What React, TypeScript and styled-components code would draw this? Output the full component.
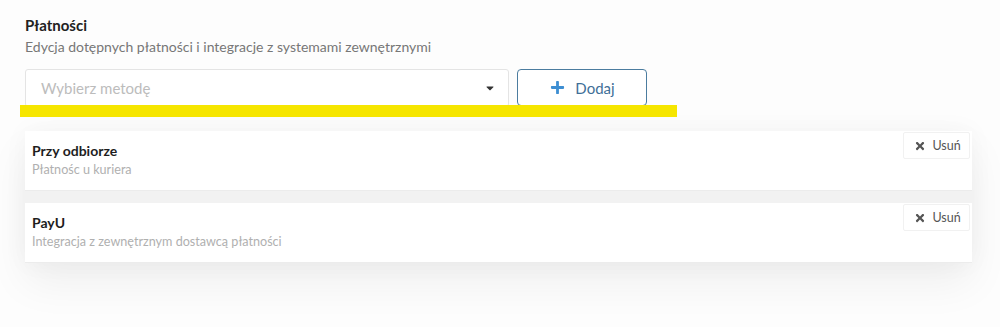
import React from 'react';
import styled, { createGlobalStyle } from 'styled-components';
import { FaPlus, FaTimes, FaCaretDown } from 'react-icons/fa';

const GlobalStyle = createGlobalStyle`
  body {
    margin: 0;
    background: #fdfdfd;
    font-family: Lato, 'Open Sans', sans-serif;
  }
`;

const Page = styled.div`
  width: 1000px;
  height: 327px;
  overflow: hidden;
  padding: 15px 28px 0 25px;
  box-sizing: border-box;
`;

const Title = styled.h2`
  margin: 0;
  font-size: 15px;
  line-height: 20px;
  font-weight: 700;
  color: #222;
`;

const Subtitle = styled.p`
  margin: 3px 0 0;
  font-size: 14px;
  line-height: 18px;
  color: #777;
`;

const Controls = styled.div`
  position: relative;
  display: flex;
  gap: 8px;
  margin-top: 13px;
`;

const Select = styled.div`
  width: 484px;
  height: 38px;
  box-sizing: border-box;
  border: 1px solid #e4e4e4;
  border-radius: 3px;
  background: #fff;
  display: flex;
  align-items: center;
  justify-content: space-between;
  padding: 0 12px 0 15px;
  font-size: 15px;
  color: #bcbcbc;
`;

const Caret = styled(FaCaretDown)`
  color: #333;
  font-size: 12px;
`;

const AddButton = styled.button`
  width: 130px;
  height: 37px;
  box-sizing: border-box;
  border: 1px solid #4b7c9f;
  border-radius: 4px;
  background: #fff;
  display: flex;
  align-items: center;
  justify-content: center;
  gap: 10px;
  font-family: inherit;
  font-size: 15px;
  color: #3f6f98;
  padding: 0 0 0 1px;
  svg {
    color: #3d8ed2;
    font-size: 15px;
  }
`;

const Highlight = styled.div`
  position: absolute;
  left: -5px;
  top: 36px;
  width: 657px;
  height: 12px;
  background: #f6e600;
`;

const List = styled.div`
  margin-top: 24px;
  width: 947px;
  display: flex;
  flex-direction: column;
  gap: 12px;
  background: #f2f2f2;
  box-shadow: 0 20px 40px rgba(0, 0, 0, 0.06), 0 0 24px rgba(0, 0, 0, 0.04);
`;

const Card = styled.div`
  height: 60px;
  box-sizing: border-box;
  background: #fff;
  border-bottom: 1px solid #ececec;
  display: flex;
  justify-content: space-between;
  align-items: flex-start;
  padding: 1px 2px 0 7px;
`;

const CardText = styled.div`
  padding-top: 10px;
`;

const CardTitle = styled.div`
  font-size: 14px;
  line-height: 18px;
  font-weight: 700;
  color: #1e1e1e;
`;

const CardDesc = styled.div`
  font-size: 12.6px;
  line-height: 17px;
  margin-top: 1px;
  color: #b0b0b0;
`;

const RemoveButton = styled.button`
  width: 67px;
  height: 27px;
  box-sizing: border-box;
  border: 1px solid #f1f1f1;
  border-radius: 2px;
  background: #fff;
  display: flex;
  align-items: center;
  justify-content: center;
  gap: 6px;
  font-family: inherit;
  font-size: 12.5px;
  color: #555;
  padding: 0 0 0 2px;
  svg {
    font-size: 12px;
    color: #555;
  }
`;

const methods = [
  { name: 'Przy odbiorze', desc: 'Płatnośc u kuriera' },
  { name: 'PayU', desc: 'Integracja z zewnętrznym dostawcą płatności' },
];

export default function App() {
  return (
    <>
      <GlobalStyle />
      <Page>
        <Title>Płatności</Title>
        <Subtitle>Edycja dotępnych płatności i integracje z systemami zewnętrznymi</Subtitle>
        <Controls>
          <Select>
            <span>Wybierz metodę</span>
            <Caret />
          </Select>
          <AddButton>
            <FaPlus />
            Dodaj
          </AddButton>
          <Highlight />
        </Controls>
        <List>
          {methods.map((m) => (
            <Card key={m.name}>
              <CardText>
                <CardTitle>{m.name}</CardTitle>
                <CardDesc>{m.desc}</CardDesc>
              </CardText>
              <RemoveButton>
                <FaTimes />
                Usuń
              </RemoveButton>
            </Card>
          ))}
        </List>
      </Page>
    </>
  );
}
